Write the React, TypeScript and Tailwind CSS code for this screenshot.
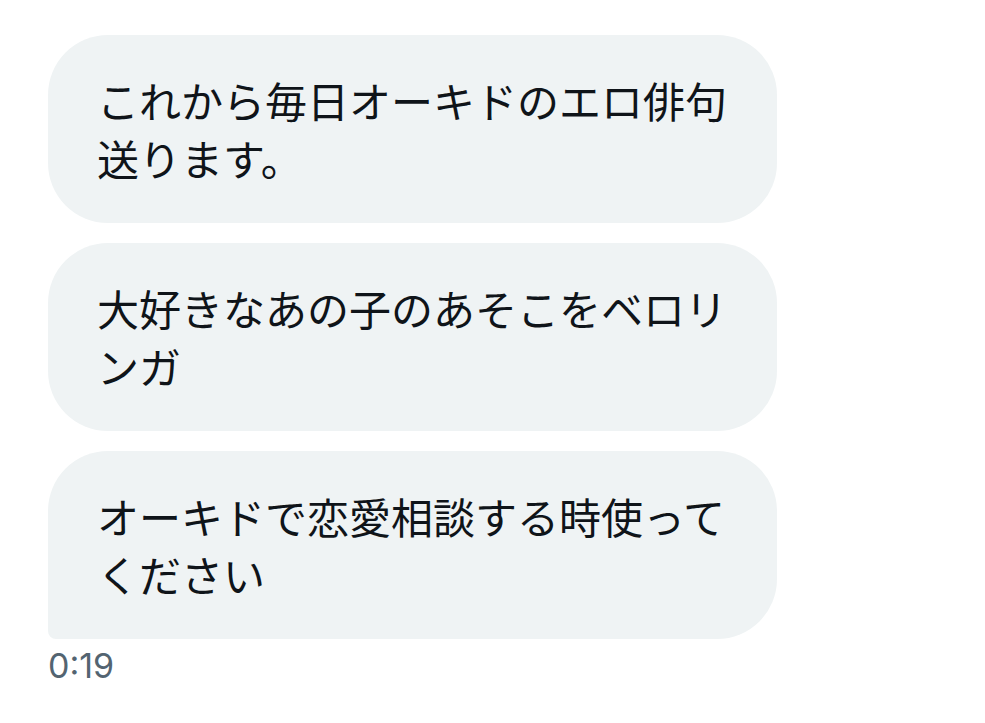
const messages = [
  "これから毎日オーキドのエロ俳句送ります。",
  "大好きなあの子のあそこをベロリンガ",
  "オーキドで恋愛相談する時使ってください",
];

const Bubble = ({ text, last }: { text: string; last: boolean }) => {
  return (
    <div
      className={`w-[729px] bg-[#eff3f4] rounded-[60px] px-[49px] py-[36px] text-[42px] leading-[58px] text-[#0f1419] ${
        last ? "rounded-bl-[8px]" : ""
      }`}
    >
      {text}
    </div>
  );
};

export default function App() {
  return (
    <div
      className="min-h-[723px] w-[985px] bg-white pl-[48px] pt-[35px]"
      style={{ fontFamily: '"Noto Sans CJK JP", "Noto Sans", sans-serif' }}
    >
      {/* MESSAGE GROUP */}
      <div className="flex flex-col gap-[20px]">
        {messages.map((m, i) => (
          <Bubble key={i} text={m} last={i === messages.length - 1} />
        ))}
      </div>

      {/* TIMESTAMP */}
      <p className="mt-[7px] text-[34px] leading-[40px] text-[#536471] font-['Inter',sans-serif]">
        0:19
      </p>
    </div>
  );
}
